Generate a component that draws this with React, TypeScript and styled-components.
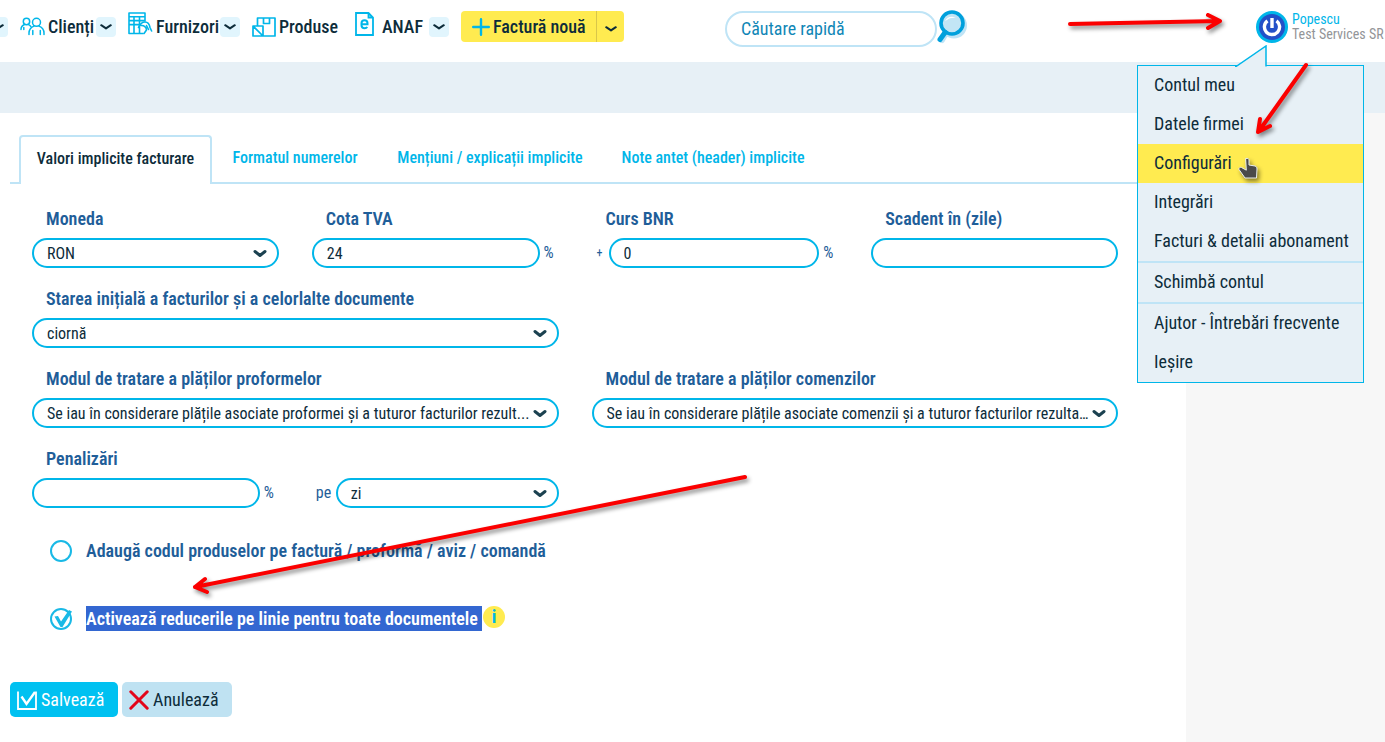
import React from "react";
import styled, { createGlobalStyle, css } from "styled-components";

const color = {
  ink: "#0d2c3a",
  label: "#1f5e99",
  cyan: "#00b6e9",
  pale: "#bfe4f6",
  band: "#e7f0f6",
  yellow: "#ffeb50",
};

const GlobalStyle = createGlobalStyle`
  *, *::before, *::after { box-sizing: border-box; }
  body {
    margin: 0;
    background: #fff;
    color: ${color.ink};
    font-family: "Roboto Condensed", Roboto, "Liberation Sans", sans-serif;
    font-size: 16px;
    line-height: 20px;
    overflow-x: hidden;
  }
  button, input, select { font: inherit; color: inherit; }
  button { cursor: pointer; }
  svg { display: block; flex: none; }
`;

const Page = styled.div`
  position: relative;
  min-height: 100vh;
  display: flex;
  flex-direction: column;
  overflow: hidden;
`;

/* ---------- header ---------- */

const Header = styled.header`
  position: relative;
  z-index: 2;
  display: flex;
  align-items: center;
  height: 62px;
  padding-bottom: 9px;
`;

const Nav = styled.nav`
  display: flex;
  align-items: center;
  gap: 12px;
  margin-left: -12px;
`;

const NavItem = styled.div<{ $gap?: number }>`
  display: flex;
  align-items: center;
  gap: 4px;
  margin-right: ${(p) => p.$gap ?? 0}px;
`;

const NavLink = styled.a<{ $width: number; $gap?: number }>`
  display: flex;
  align-items: center;
  gap: ${(p) => p.$gap ?? 3}px;
  width: ${(p) => p.$width}px;
  color: ${color.ink};
  font-size: 18px;
  font-weight: 500;
  white-space: nowrap;
  text-decoration: none;
`;

const NavIcon = styled.span<{ $raised?: boolean }>`
  display: flex;
  padding-bottom: ${(p) => (p.$raised ? 6 : 0)}px;
`;

const Toggle = styled.button`
  display: flex;
  align-items: center;
  justify-content: center;
  width: 20px;
  height: 20px;
  padding: 0;
  border: 0;
  border-radius: 4px;
  background: #e1f5fd;
`;

const NewInvoice = styled.div`
  display: flex;
  height: 31px;
  border-radius: 4px;
  background: ${color.yellow};
  overflow: hidden;
`;

const NewInvoiceButton = styled.button`
  display: flex;
  align-items: center;
  gap: 3px;
  width: 135px;
  padding: 0 0 0 11px;
  border: 0;
  background: none;
  font-size: 18px;
  font-weight: 500;
  white-space: nowrap;
`;

const NewInvoiceToggle = styled.button`
  display: flex;
  align-items: center;
  justify-content: center;
  width: 28px;
  padding: 4px 0 0;
  border: 0;
  border-left: 1px solid #d9c64a;
  background: none;
`;

const Search = styled.form`
  display: flex;
  align-items: center;
  flex: none;
  margin: 4px 0 0 auto;
`;

const SearchInput = styled.input`
  width: 212px;
  height: 36px;
  padding: 0 14px;
  border: 2px solid ${color.pale};
  border-radius: 18px;
  outline: 0;
  background: #fff;
  font-size: 18px;
  &::placeholder { color: #0f86b6; opacity: 1; }
`;

const SearchButton = styled.button`
  padding: 0;
  margin-bottom: 4px;
  border: 0;
  background: none;
`;

const Account = styled.div`
  position: relative;
  display: flex;
  align-items: center;
  flex: none;
  gap: 4px;
  width: 129px;
  margin-left: 288px;
  white-space: nowrap;
`;

const AccountNames = styled.div`
  display: flex;
  flex-direction: column;
  font-size: 14px;
  line-height: 15px;
`;

const UserName = styled.span`color: ${color.cyan};`;
const CompanyName = styled.span`color: #939598;`;

const Menu = styled.nav`
  position: absolute;
  top: 65px;
  right: 21px;
  width: 227px;
  border: 1px solid ${color.cyan};
  background: ${color.band};
`;

const MenuPointer = styled.svg`
  position: absolute;
  right: 95px;
  bottom: 100%;
  margin-bottom: -1px;
`;

const MenuItem = styled.a<{ $active?: boolean; $divided?: boolean }>`
  display: flex;
  align-items: center;
  height: ${(p) => (p.$divided ? 41 : 39)}px;
  padding: 0 0 2px 16px;
  color: ${color.ink};
  font-size: 18px;
  text-decoration: none;
  white-space: nowrap;
  ${(p) => p.$divided && css`border-bottom: 2px solid ${color.pale};`}
  ${(p) => p.$active && css`background: ${color.yellow};`}
`;

/* ---------- body ---------- */

const Band = styled.div`
  height: 51px;
  background: ${color.band};
`;

const Body = styled.div`
  flex: 1;
  display: grid;
  grid-template-columns: minmax(0, 1fr) 199px;
`;

const Sidebar = styled.aside`background: #f7f7f7;`;

const Main = styled.main`
  padding: 22px 0 24px 10px;
`;

const Tabs = styled.div`
  display: flex;
  height: 49px;
`;

const TabsEdge = styled.span<{ $grow?: boolean }>`
  border-bottom: 2px solid ${color.pale};
  ${(p) => (p.$grow ? css`flex: 1;` : css`width: 9px;`)}
`;

const Tab = styled.button<{ $active?: boolean; $width: number }>`
  width: ${(p) => p.$width}px;
  padding: 0 0 2px;
  border: 0 solid ${color.pale};
  border-bottom-width: 2px;
  background: none;
  color: ${color.cyan};
  font-size: 16px;
  font-weight: 500;
  white-space: nowrap;
  ${(p) =>
    p.$active &&
    css`
      padding-bottom: 4px;
      border-width: 2px 2px 0;
      border-radius: 4px 4px 0 0;
      color: ${color.ink};
    `}
`;

const Form = styled.form`
  padding: 25px 68px 0 22px;
`;

const Fields = styled.div`
  display: grid;
  grid-template-columns: repeat(4, minmax(0, 1fr));
  gap: 21px 33px;
`;

const Cell = styled.div<{ $span?: number }>`
  grid-column: span ${(p) => p.$span ?? 1};
  display: flex;
  flex-direction: column;
  justify-content: flex-end;
  gap: 9px;
`;

const Spacer = styled.div`grid-column: span 2;`;

const Label = styled.label`
  padding-left: 14px;
  color: ${color.label};
  font-size: 18px;
  font-weight: 600;
  white-space: nowrap;
`;

const Line = styled.div`
  display: flex;
  align-items: center;
  color: ${color.label};
`;

const Unit = styled.span`
  width: 19px;
  padding-left: 4px;
`;

const Plus = styled.span`
  width: 17px;
  padding-left: 5px;
  font-size: 12px;
`;

const Per = styled.label`
  width: 24px;
  padding-left: 4px;
`;

const control = css`
  width: 100%;
  height: 30px;
  border: 2px solid ${color.cyan};
  border-radius: 15px;
  outline: 0;
  background: #fff;
  color: ${color.ink};
  font-size: 16px;
`;

const TextInput = styled.input`
  ${control}
  flex: 1;
  min-width: 0;
  padding: 0 13px;
`;

const SelectBox = styled.div`
  position: relative;
  flex: 1;
`;

const Select = styled.select`
  ${control}
  display: block;
  appearance: none;
  padding: 2px 26px 0 13px;
  text-overflow: ellipsis;
`;

const SelectArrow = styled.span`
  position: absolute;
  top: 11px;
  right: 12px;
  pointer-events: none;
`;

const Options = styled.div`
  display: flex;
  flex-direction: column;
  gap: 44px;
  padding: 31px 0 0 18px;
`;

const Option = styled.div`
  display: flex;
  align-items: center;
  height: 24px;
`;

const TickBox = styled.span`
  position: relative;
  width: 36px;
  height: 22px;
`;

const Tick = styled.input`
  appearance: none;
  display: block;
  width: 22px;
  height: 22px;
  margin: 0;
  border: 2px solid #19b9e6;
  border-radius: 50%;
`;

const TickMark = styled.svg`
  position: absolute;
  top: 0;
  left: 0;
  pointer-events: none;
`;

const OptionLabel = styled.label<{ $selected?: boolean }>`
  margin-bottom: 2px;
  color: ${color.label};
  font-size: 18px;
  font-weight: 600;
  line-height: 25px;
  white-space: pre;
  ${(p) => p.$selected && css`background: #3367d1; color: #fff;`}
`;

const Info = styled.button`
  width: 22px;
  height: 22px;
  margin: 0 0 4px 1px;
  padding: 0;
  border: 0;
  border-radius: 50%;
  background: ${color.yellow};
  color: ${color.cyan};
  font-size: 18px;
  font-weight: 700;
  line-height: 22px;
`;

const Actions = styled.div`
  display: flex;
  gap: 4px;
  margin: 51px 0 0 -22px;
`;

const Action = styled.button<{ $primary?: boolean }>`
  display: flex;
  align-items: center;
  gap: 4px;
  width: ${(p) => (p.$primary ? 108 : 110)}px;
  height: 35px;
  padding: 0 7px;
  border: 0;
  border-radius: 5px;
  background: ${(p) => (p.$primary ? "#00c1f1" : "#bfe2f2")};
  color: ${(p) => (p.$primary ? "#fff" : color.ink)};
  font-size: 18px;
  white-space: nowrap;
`;

const Overlay = styled.svg`
  position: absolute;
  top: 0;
  left: 0;
  z-index: 3;
  pointer-events: none;
  filter: drop-shadow(2px 3px 2px rgba(0, 0, 0, 0.45));
`;

/* ---------- drawings ---------- */

const Chevron = ({ bold }: { bold?: boolean }) => (
  <svg width={bold ? 14 : 12} height={bold ? 9 : 6} viewBox={bold ? "0 0 14 9" : "0 0 12 6"} fill="none" stroke={bold ? "#1b4150" : color.ink} strokeWidth={bold ? 3 : 2} strokeLinecap="round" strokeLinejoin="round">
    <path d={bold ? "M2 2.500L7 6.500 12 2.500" : "M1.200 1.200L6 4.400 10.800 1.200"} />
  </svg>
);

const ClientsIcon = () => (
  <svg width="25" height="19" viewBox="0 0 25 19" fill="none" stroke={color.cyan} strokeWidth="1.500" strokeLinecap="round">
    <circle cx="16.500" cy="5.300" r="4" />
    <path d="M9 17.500V16c0-3.200 1.800-5.600 5-6.900M24 17.500V16c0-3.200-1.800-5.600-5-6.900M12.800 17.500v-4M20.300 17.500v-4" />
    <circle cx="6.500" cy="4.500" r="3.200" />
    <path d="M1 12.500c0-2.500 1-4 3.500-5M8.500 7.600c1.200.4 1.900 1 2.400 2M3.800 12.500v-2" />
  </svg>
);

const SuppliersIcon = () => (
  <svg width="25" height="23" viewBox="0 0 25 23" fill="none" stroke={color.cyan} strokeWidth="1.600" strokeLinejoin="round" strokeLinecap="round">
    <path d="M15 21.500H1V1h16v8M1 4.800h16M1 8.600h15M1 12.600h11M6 4.800v16.700M11.500 4.800v16.700" />
    <path d="M10.500 15.500c1.500-3.500 3.500-5.500 6.500-5.500 3 0 4.500 2.500 5 5.500l1.600 3.500M13 13.500c3-.3 5.500 1.500 5.500 4.500l-2.500 3.500M18.500 13.500l2 4" />
  </svg>
);

const ProductsIcon = () => (
  <svg width="24" height="20" viewBox="0 0 24 20" fill="none" stroke={color.cyan} strokeWidth="1.700" strokeLinejoin="round">
    <path d="M5.500 9V1H23v18H11M11.500 1v5.500h6V1M1 9h10v10H1zM1 9l10 10" />
  </svg>
);

const AnafIcon = () => (
  <svg width="19" height="24" viewBox="0 0 19 24" fill="none" stroke={color.cyan} strokeWidth="1.800">
    <path d="M1 1h12.500L18 5.500V23H1zM13.500 1v4.500H18" />
    <path d="M6.500 12.200h6v-1c0-2-1.200-3-3-3s-3 1.300-3 3v2c0 2 1.200 3 3.200 3 1.200 0 2-.4 2.600-1.200" strokeWidth="2" />
  </svg>
);

const PlusIcon = () => (
  <svg width="18" height="18" viewBox="0 0 18 18" stroke={color.cyan} strokeWidth="2.400" strokeLinecap="round">
    <path d="M9 1.200v15.600M1.200 9h15.600" />
  </svg>
);

const MagnifierIcon = () => (
  <svg width="31" height="34" viewBox="0 0 31 34">
    <circle cx="17" cy="15.500" r="13" fill="#bfe4f6" />
    <path d="M9 23l-4 7" stroke="#bfe4f6" strokeWidth="6" strokeLinecap="round" />
    <circle cx="15" cy="13" r="11" fill="#c2e5f5" stroke="#00a0dc" strokeWidth="3.600" />
    <path d="M8 22.500l-5 7" stroke="#00a0dc" strokeWidth="5" strokeLinecap="round" />
    <path d="M8 11c2-4 7-5.500 11-3-4-.5-7 .5-9 2z" fill="#fff" />
  </svg>
);

const AvatarIcon = () => (
  <svg width="32" height="32" viewBox="0 0 32 32" fill="none">
    <circle cx="16" cy="16" r="16" fill={color.cyan} />
    <circle cx="16" cy="16" r="13" fill="#2350c8" />
    <path d="M11.500 9.800a7.600 7.600 0 1 0 9 0" stroke="#fff" strokeWidth="3.400" />
    <path d="M16 7V17" stroke="#fff" strokeWidth="3.400" />
  </svg>
);

const SaveIcon = () => (
  <svg width="20" height="20" viewBox="0 0 20 20" fill="none" stroke="#fff" strokeWidth="1.800">
    <path d="M1 1.500V19h18V1.500" />
    <path d="M4.500 6.500l5 7.500 8.500-12" strokeWidth="2.400" />
  </svg>
);

const CancelIcon = () => (
  <svg width="20" height="20" viewBox="0 0 20 20" stroke="#e3051b" strokeWidth="3" strokeLinecap="round">
    <path d="M1.800 1.800l16.400 16.400M18.200 1.800L1.800 18.200" />
  </svg>
);

const HandCursor = () => (
  <svg x="1238" y="157" width="20" height="22" viewBox="0 0 20 22">
    <path d="M8 1.500C10 .8 11 2 11 3v5l6 1c1.500.4 2 1.500 2 3l-.5 9H7L1 12.500C.5 11 2 10 3.500 10.500L8 13z" fill="#4a4a4a" stroke="#e9eef0" strokeWidth="1" />
  </svg>
);

/* ---------- page ---------- */

const menuItems = [
  { text: "Contul meu" },
  { text: "Datele firmei" },
  { text: "Configurări", active: true },
  { text: "Integrări" },
  { text: "Facturi & detalii abonament", divided: true },
  { text: "Schimbă contul", divided: true },
  { text: "Ajutor - Întrebări frecvente" },
  { text: "Ieșire" },
];

const tabs = [
  { text: "Valori implicite facturare", width: 193, active: true },
  { text: "Formatul numerelor", width: 166 },
  { text: "Mențiuni / explicații implicite", width: 224 },
  { text: "Note antet (header) implicite", width: 222 },
];

function Dropdown({ id, value }: { id: string; value: string }) {
  return (
    <SelectBox>
      <Select id={id}>
        <option>{value}</option>
      </Select>
      <SelectArrow><Chevron bold /></SelectArrow>
    </SelectBox>
  );
}

export default function App() {
  return (
    <Page>
      <GlobalStyle />
      <Header>
        <Nav>
          <Toggle aria-label="Deschide"><Chevron /></Toggle>
          <NavItem>
            <NavLink href="#clienti" $width={72}><NavIcon><ClientsIcon /></NavIcon>Clienți</NavLink>
            <Toggle aria-label="Clienți"><Chevron /></Toggle>
          </NavItem>
          <NavItem>
            <NavLink href="#furnizori" $width={88}><NavIcon $raised><SuppliersIcon /></NavIcon>Furnizori</NavLink>
            <Toggle aria-label="Furnizori"><Chevron /></Toggle>
          </NavItem>
          <NavItem $gap={6}>
            <NavLink href="#produse" $width={85}><NavIcon><ProductsIcon /></NavIcon>Produse</NavLink>
          </NavItem>
          <NavItem>
            <NavLink href="#anaf" $width={70} $gap={8}><NavIcon $raised><AnafIcon /></NavIcon>ANAF</NavLink>
            <Toggle aria-label="ANAF"><Chevron /></Toggle>
          </NavItem>
          <NewInvoice>
            <NewInvoiceButton><PlusIcon />Factură nouă</NewInvoiceButton>
            <NewInvoiceToggle aria-label="Alte documente"><Chevron /></NewInvoiceToggle>
          </NewInvoice>
        </Nav>
        <Search>
          <SearchInput type="search" aria-label="Căutare rapidă" placeholder="Căutare rapidă" />
          <SearchButton type="button" aria-label="Caută"><MagnifierIcon /></SearchButton>
        </Search>
        <Account>
          <AvatarIcon />
          <AccountNames>
            <UserName>Popescu</UserName>
            <CompanyName>Test Services SR</CompanyName>
          </AccountNames>
        </Account>
        <Menu>
          <MenuPointer width="33" height="22" viewBox="0 0 33 22">
            <path d="M0 22L1 21.500 31 1V22z" fill={color.band} />
            <path d="M0 21.500H1L31 1V21.500" fill="none" stroke={color.cyan} strokeWidth="1.500" />
          </MenuPointer>
          {menuItems.map((m) => (
            <MenuItem key={m.text} href="#cont" $active={m.active} $divided={m.divided}>{m.text}</MenuItem>
          ))}
        </Menu>
      </Header>
      <Band />
      <Body>
        <Main>
          <Tabs role="tablist">
            <TabsEdge />
            {tabs.map((t) => (
              <Tab key={t.text} role="tab" aria-selected={!!t.active} $active={t.active} $width={t.width}>{t.text}</Tab>
            ))}
            <TabsEdge $grow />
          </Tabs>
          <Form>
            <Fields>
              <Cell>
                <Label htmlFor="moneda">Moneda</Label>
                <Line><Dropdown id="moneda" value="RON" /></Line>
              </Cell>
              <Cell>
                <Label htmlFor="tva">Cota TVA</Label>
                <Line><TextInput id="tva" defaultValue="24" /><Unit>%</Unit></Line>
              </Cell>
              <Cell>
                <Label htmlFor="curs">Curs BNR</Label>
                <Line><Plus>+</Plus><TextInput id="curs" defaultValue="0" /><Unit>%</Unit></Line>
              </Cell>
              <Cell>
                <Label htmlFor="scadent">Scadent în (zile)</Label>
                <Line><TextInput id="scadent" /></Line>
              </Cell>
              <Cell $span={2}>
                <Label htmlFor="stare">Starea inițială a facturilor și a celorlalte documente</Label>
                <Line><Dropdown id="stare" value="ciornă" /></Line>
              </Cell>
              <Spacer />
              <Cell $span={2}>
                <Label htmlFor="proforme">Modul de tratare a plăților proformelor</Label>
                <Line><Dropdown id="proforme" value="Se iau în considerare plățile asociate proformei și a tuturor facturilor rezult..." /></Line>
              </Cell>
              <Cell $span={2}>
                <Label htmlFor="comenzi">Modul de tratare a plăților comenzilor</Label>
                <Line><Dropdown id="comenzi" value="Se iau în considerare plățile asociate comenzii și a tuturor facturilor rezulta..." /></Line>
              </Cell>
              <Cell>
                <Label htmlFor="penalizari">Penalizări</Label>
                <Line><TextInput id="penalizari" /><Unit>%</Unit></Line>
              </Cell>
              <Cell>
                <Line><Per htmlFor="perioada">pe</Per><Dropdown id="perioada" value="zi" /></Line>
              </Cell>
            </Fields>
            <Options>
              <Option>
                <TickBox><Tick type="checkbox" id="cod" /></TickBox>
                <OptionLabel htmlFor="cod">Adaugă codul produselor pe factură / proformă / aviz / comandă</OptionLabel>
              </Option>
              <Option>
                <TickBox>
                  <Tick type="checkbox" id="reduceri" defaultChecked />
                  <TickMark width="22" height="22" viewBox="0 0 22 22">
                    <path d="M4.500 8.500L8 8l3 5.500L19 2l3 1.500L12.500 19h-2z" fill="#19b9e6" />
                  </TickMark>
                </TickBox>
                <OptionLabel htmlFor="reduceri" $selected>{"Activează reducerile pe linie pentru toate documentele "}</OptionLabel>
                <Info type="button">i</Info>
              </Option>
            </Options>
            <Actions>
              <Action type="button" $primary><SaveIcon />Salvează</Action>
              <Action type="button"><CancelIcon />Anulează</Action>
            </Actions>
          </Form>
        </Main>
        <Sidebar />
      </Body>
      <Overlay width="1385" height="742" viewBox="0 0 1385 742" fill="none" stroke="#fb0000" strokeWidth="4" strokeLinecap="round" strokeLinejoin="round">
        <path d="M1070 24L1219 21M1208 15L1220 21L1208 28" />
        <path d="M1306 65L1259 131M1260 119L1258 132L1270 126" />
        <path d="M745 477L195 587M205 579L195 587L207 592" />
        <HandCursor />
      </Overlay>
    </Page>
  );
}
